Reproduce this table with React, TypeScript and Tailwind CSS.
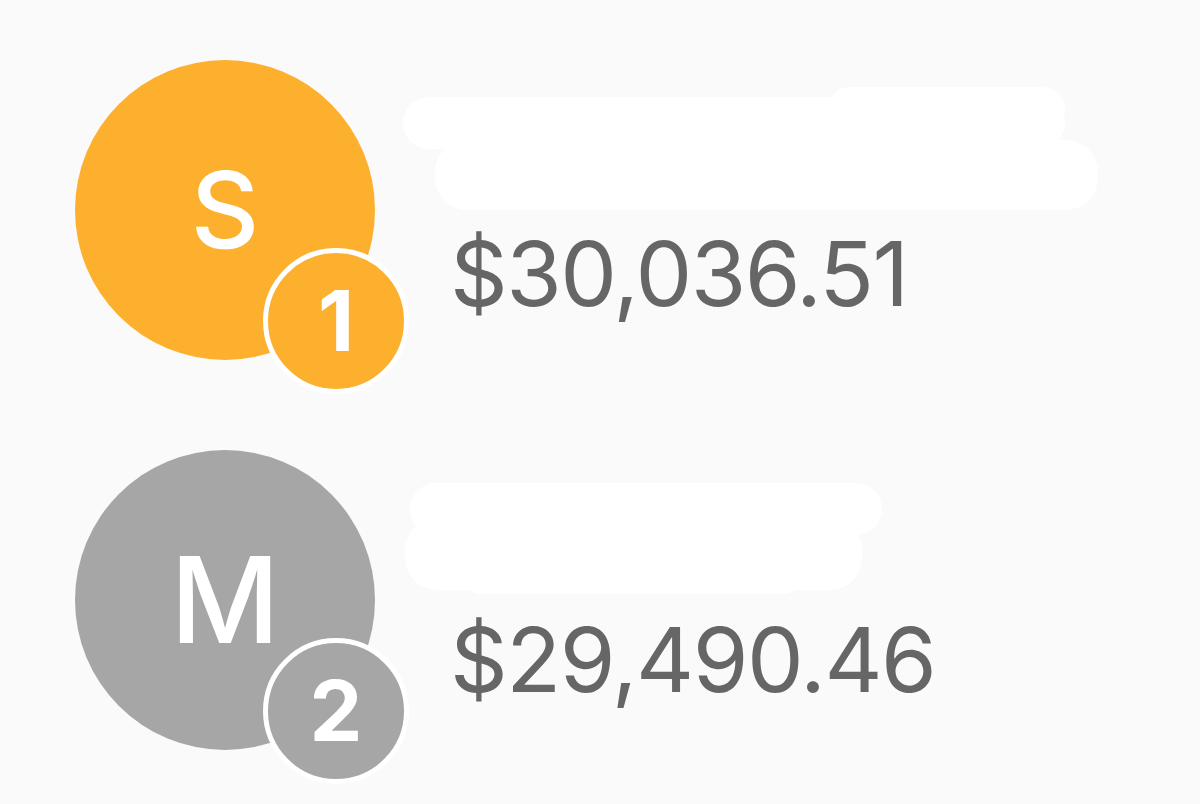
import React from "react";

// --------
// leaderboard rows (names are redacted with white marker strokes)
// --------

type Entry = {
  initial: string;
  rank: number;
  amount: string;
  color: string;
  letterSize: string;
};

const entries: Entry[] = [
  { initial: "S", rank: 1, amount: "$30,036.51", color: "bg-[#fdb02e]", letterSize: "text-[106px]" },
  { initial: "M", rank: 2, amount: "$29,490.46", color: "bg-[#a6a6a6]", letterSize: "text-[120px]" },
];

const RedactTop = () => (
  <svg width="700" height="128" viewBox="0 0 700 128" className="block">
    <g fill="#ffffff">
      <rect x="0" y="12" width="662" height="52" rx="26" />
      <rect x="425" y="2" width="237" height="44" rx="22" />
      <rect x="32" y="55" width="663" height="70" rx="32" />
    </g>
  </svg>
);

const RedactBottom = () => (
  <svg width="480" height="116" viewBox="0 0 480 116" className="block">
    <g fill="#ffffff">
      <rect x="5" y="3" width="472" height="52" rx="26" />
      <rect x="0" y="38" width="457" height="72" rx="32" />
      <rect x="55" y="70" width="345" height="44" rx="22" />
    </g>
  </svg>
);

const Avatar = ({ entry }: { entry: Entry }) => (
  <div className={`relative w-[300px] h-[300px] shrink-0 rounded-full ${entry.color} flex items-center justify-center`}>
    <span className={`${entry.letterSize} leading-none font-medium text-white`}>{entry.initial}</span>
    <div className={`absolute left-[188px] top-[188px] w-[146px] h-[146px] rounded-full border-[5px] border-white ${entry.color} flex items-center justify-center`}>
      <span className="text-[84px] leading-none font-bold text-white">{entry.rank}</span>
    </div>
  </div>
);

export default function App() {
  return (
    <div className="min-h-screen w-full bg-[#fafafa] font-['Inter','Liberation_Sans',sans-serif] pt-[60px] pl-[75px] flex flex-col gap-[90px] overflow-hidden">
      <div className="flex items-start">
        <Avatar entry={entries[0]} />
        <div className="ml-[28px] mt-[25px] flex flex-col">
          <RedactTop />
          <p className="mt-[16px] ml-[47px] text-[90px] leading-none tracking-[-1.5px] text-[#666666]">{entries[0].amount}</p>
        </div>
      </div>
      <div className="flex items-start">
        <Avatar entry={entries[1]} />
        <div className="ml-[30px] mt-[30px] flex flex-col">
          <RedactBottom />
          <p className="mt-[19px] ml-[45px] text-[90px] leading-none tracking-[-1.5px] text-[#666666]">{entries[1].amount}</p>
        </div>
      </div>
    </div>
  );
}
